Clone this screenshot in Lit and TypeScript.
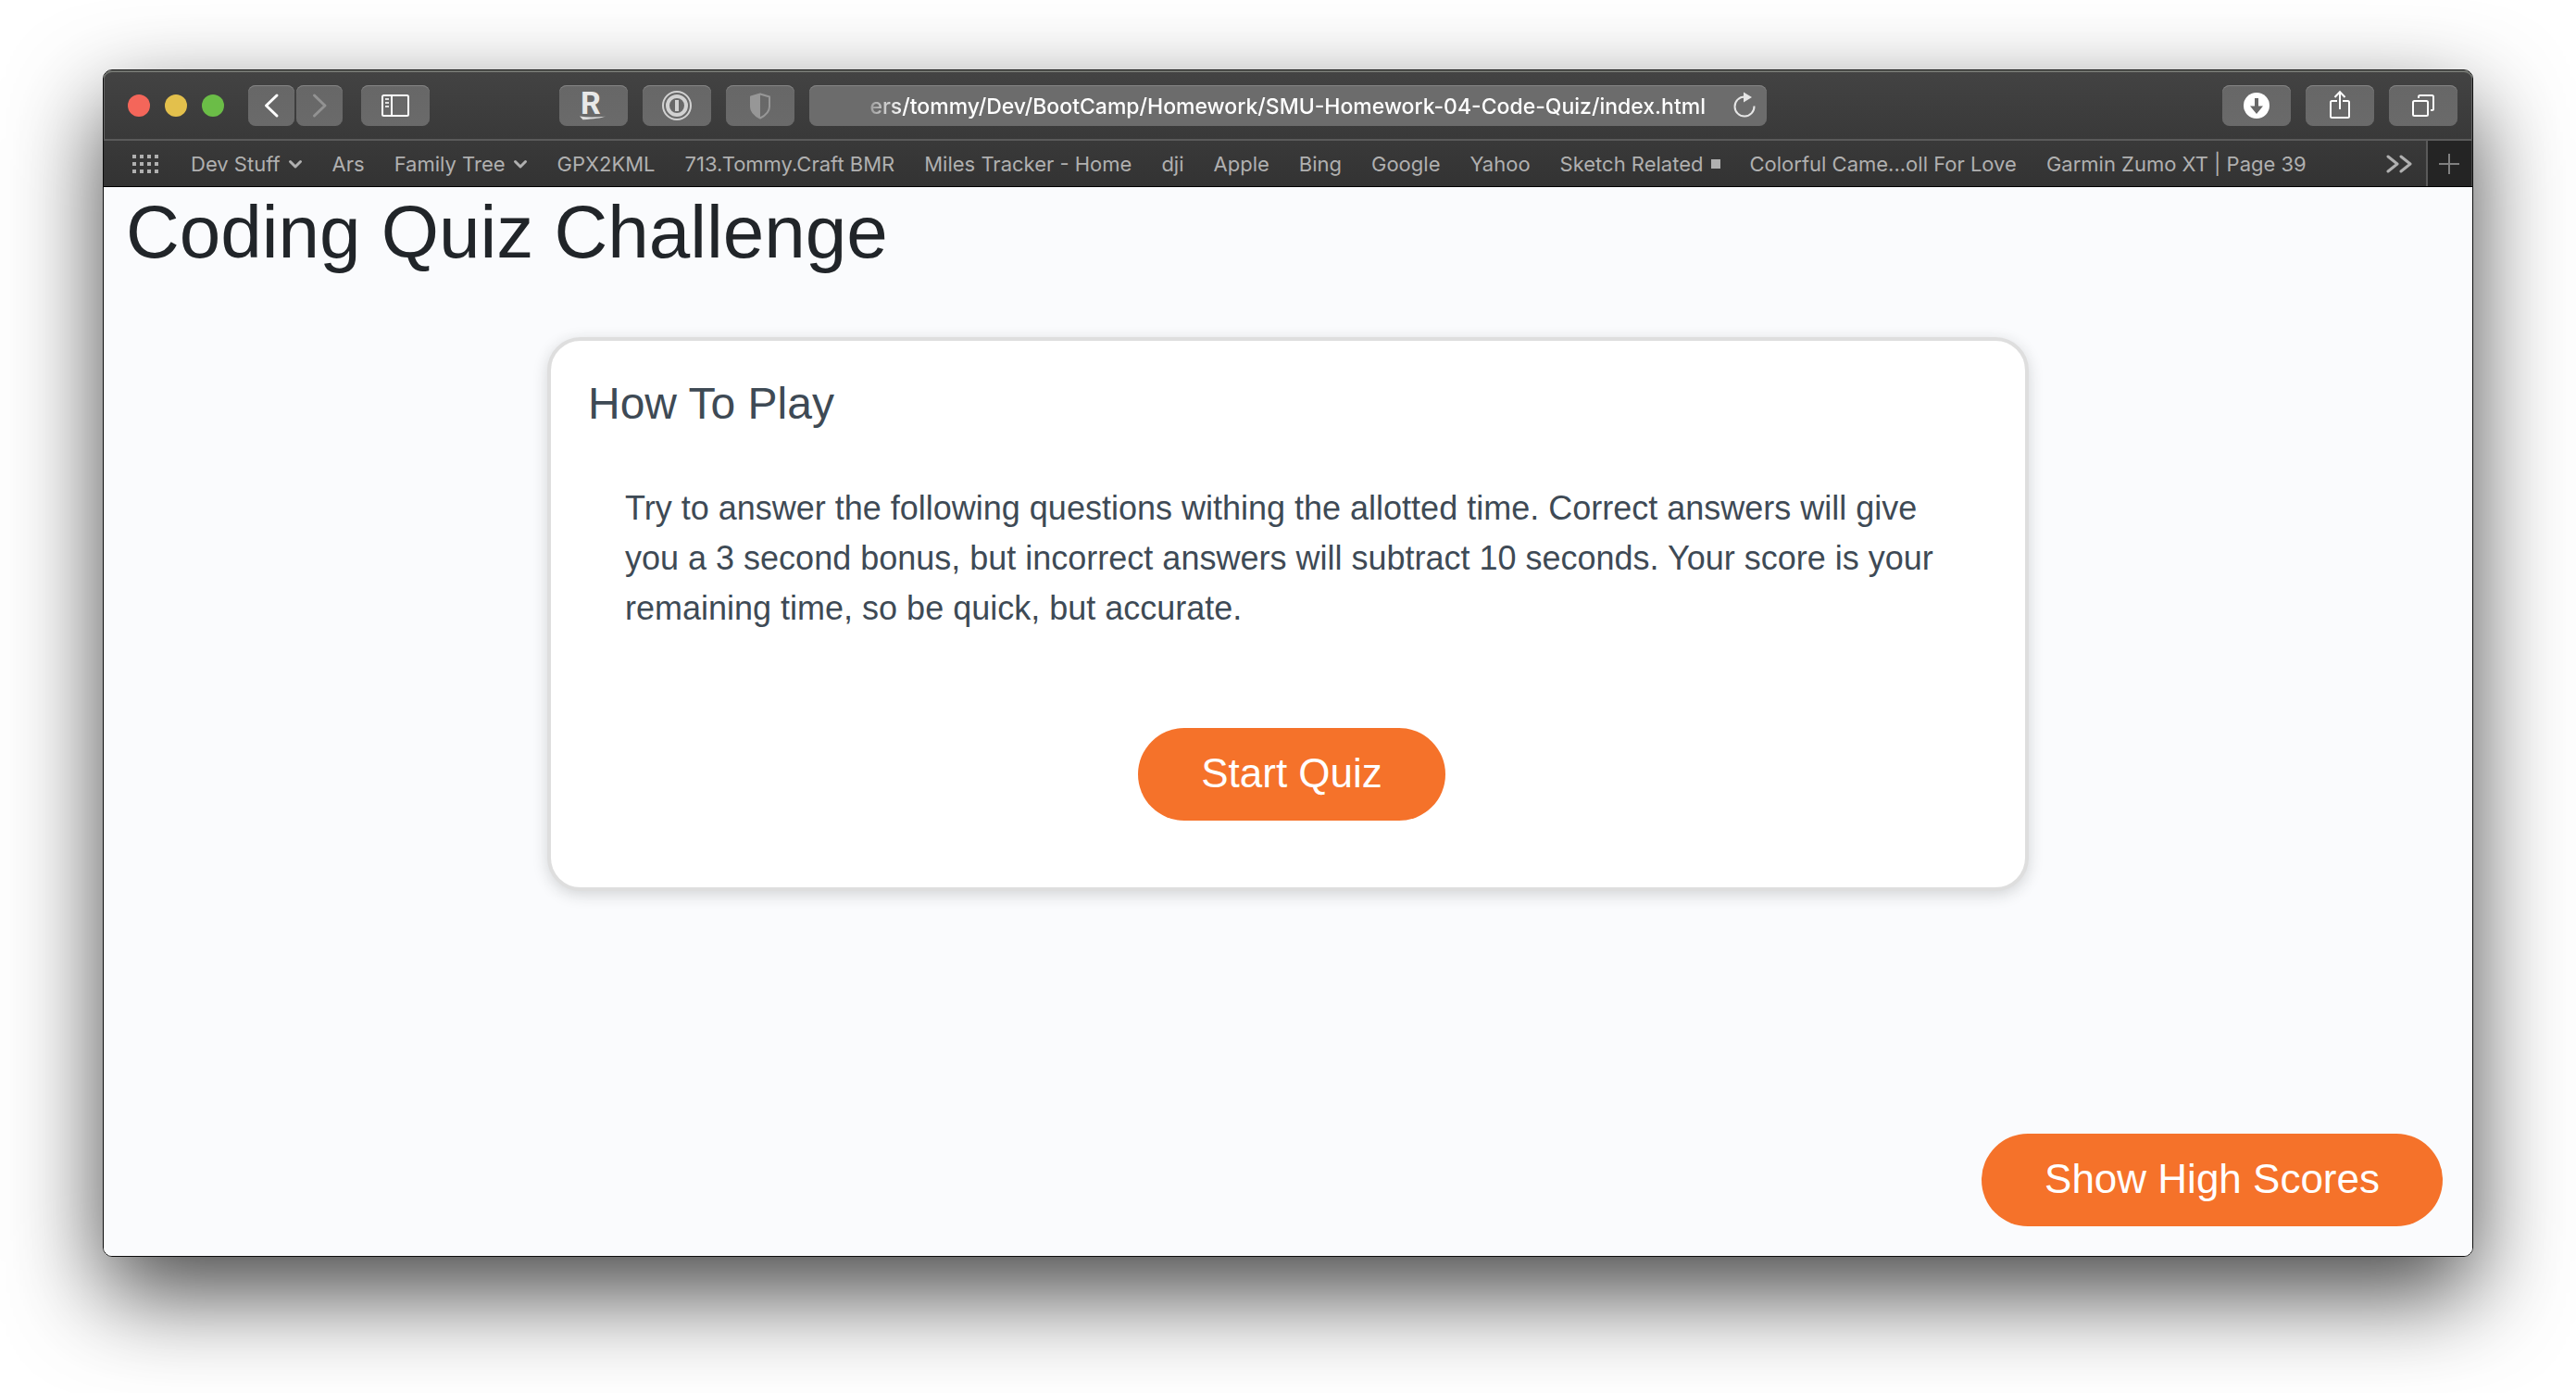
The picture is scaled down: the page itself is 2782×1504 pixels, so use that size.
import { LitElement, html, css, svg, nothing } from "lit";
import { customElement } from "lit/decorators.js";

interface Bookmark {
  label: string;
  mark?: "menu" | "tabs";
}

const BOOKMARKS: Bookmark[] = [
  { label: "Dev Stuff", mark: "menu" },
  { label: "Ars" },
  { label: "Family Tree", mark: "menu" },
  { label: "GPX2KML" },
  { label: "713.Tommy.Craft BMR" },
  { label: "Miles Tracker - Home" },
  { label: "dji" },
  { label: "Apple" },
  { label: "Bing" },
  { label: "Google" },
  { label: "Yahoo" },
  { label: "Sketch Related", mark: "tabs" },
  { label: "Colorful Came...oll For Love" },
  { label: "Garmin Zumo XT | Page 39" },
];

const ICONS = {
  back: svg`<path d="M31 11 19.500 22 31 33" stroke="#fff" stroke-width="3" stroke-linecap="round" stroke-linejoin="round"/>`,
  forward: svg`<path d="M19.500 11 31 22 19.500 33" stroke="#929292" stroke-width="3" stroke-linecap="round" stroke-linejoin="round"/>`,
  sidebar: svg`<rect x="23" y="11" width="28" height="22" rx="1.500" stroke="#fff" stroke-width="2"/><path d="M33 11v22" stroke="#fff" stroke-width="2"/><path d="M26 15h4M26 19h4M26 23h4" stroke="#e0e0e0" stroke-width="2"/>`,
  rewards: svg`<text x="23" y="31" font-family="Roboto, sans-serif" font-weight="700" font-size="34" fill="#e8e8e8">R</text><path d="M22 33.500C31 35 41 34.500 50 33.800 44 35.500 38 36.500 25.500 37.200Z" fill="#dcdcdc"/>`,
  password: svg`<circle cx="37" cy="22" r="15" stroke="#d2d2d2" stroke-width="2"/><circle cx="37" cy="22" r="10" stroke="#d2d2d2" stroke-width="4"/><path d="M37 16v12" stroke="#d2d2d2" stroke-width="4"/>`,
  shield: svg`<path d="M37 9.500 47 12.500V23C47 29 42 33 37 35.500 32 33 27 29 27 23V12.500Z" stroke="#979797" stroke-width="2" stroke-linejoin="round"/><path d="M37 9 26.500 12.500V23C26.500 29 32 33.500 37 36Z" fill="#979797"/>`,
  download: svg`<circle cx="37" cy="22" r="14" fill="#fff"/><path d="M35 14h4v8.500h5L37 31 30 22.500h5Z" fill="#686868"/>`,
  share: svg`<path d="M34 17H28.500a1.500 1.500 0 0 0-1.500 1.500v15a1.500 1.500 0 0 0 1.500 1.500h17a1.500 1.500 0 0 0 1.500-1.500v-15a1.500 1.500 0 0 0-1.500-1.500H40M37 26V7.500M31.500 13 37 7.300 42.500 13" stroke="#fff" stroke-width="2"/>`,
  tabs: svg`<rect x="26" y="17" width="16" height="16" rx="1.500" stroke="#fff" stroke-width="2"/><path d="M32 14V12.500a1.500 1.500 0 0 1 1.500-1.500h13a1.500 1.500 0 0 1 1.500 1.500v13a1.500 1.500 0 0 1-1.500 1.500H45" stroke="#fff" stroke-width="2"/>`,
};

type IconName = keyof typeof ICONS;

@customElement("browser-toolbar")
export class BrowserToolbar extends LitElement {
  static styles = css`
    :host {
      display: grid;
      grid-template-columns: 1fr minmax(200px, 1034px) 1fr;
      column-gap: 16px;
      align-items: start;
      height: 74px;
      padding: 16px 16px 0;
      box-sizing: border-box;
      background: linear-gradient(#434343, #393939);
      box-shadow: inset 0 2px #71746f, inset 1px 0 #656565, inset -1px 0 #656565;
      border-radius: 9px 9px 0 0;
    }
    .side {
      display: flex;
      align-items: center;
      gap: 16px;
    }
    .side.end {
      justify-content: flex-end;
    }
    .lights {
      display: flex;
      gap: 16px;
      margin: 0 10px;
    }
    .light {
      width: 24px;
      height: 24px;
      padding: 0;
      border: 0;
      border-radius: 50%;
    }
    .close {
      background: #f4665a;
    }
    .minimise {
      background: #e3c04c;
    }
    .zoom {
      background: #6bbd47;
    }
    .history {
      display: flex;
      gap: 2px;
      margin-right: 4px;
    }
    .extensions {
      display: flex;
      gap: 16px;
      margin-left: auto;
    }
    .tool {
      display: block;
      width: 74px;
      height: 44px;
      padding: 0;
      border: 0;
      border-radius: 8px;
      background: linear-gradient(#676767, #6a6a6a);
      box-shadow: inset 0 1px #858585;
    }
    .tool.narrow {
      width: 50px;
    }
    svg {
      display: block;
      fill: none;
    }
    .address {
      display: flex;
      align-items: center;
      height: 44px;
      padding: 0 10px 0 46px;
      border-radius: 8px;
      background: #6c6c6c;
      box-shadow: inset 0 1px #858585;
    }
    .url {
      flex: 1;
      min-width: 0;
      height: 44px;
      padding: 2px 0 0;
      border: 0;
      outline: 0;
      box-sizing: border-box;
      background: transparent;
      color: #fff;
      text-align: right;
      font: 500 23px Inter, "Liberation Sans", sans-serif;
      mask-image: linear-gradient(to right, transparent, #000 56px);
    }
    .reload {
      width: 28px;
      height: 32px;
      margin-left: 28px;
      padding: 0;
      border: 0;
      background: none;
    }
  `;

  private tool(icon: IconName, label: string, narrow = false) {
    const width = narrow ? 50 : 74;
    return html`<button class=${narrow ? "tool narrow" : "tool"} aria-label=${label}>
      <svg width=${width} height="44" viewBox="0 0 ${width} 44" aria-hidden="true">${ICONS[icon]}</svg>
    </button>`;
  }

  render() {
    return html`
      <div class="side">
        <div class="lights">
          <button class="light close" aria-label="Close window"></button>
          <button class="light minimise" aria-label="Minimise window"></button>
          <button class="light zoom" aria-label="Zoom window"></button>
        </div>
        <div class="history">${this.tool("back", "Back", true)}${this.tool("forward", "Forward", true)}</div>
        ${this.tool("sidebar", "Show sidebar")}
        <div class="extensions">
          ${this.tool("rewards", "Rewards")}${this.tool("password", "Passwords")}${this.tool("shield", "Privacy report")}
        </div>
      </div>
      <div class="address">
        <input
          class="url"
          type="text"
          aria-label="Address"
          .value=${"ers/tommy/Dev/BootCamp/Homework/SMU-Homework-04-Code-Quiz/index.html"}
        />
        <button class="reload" aria-label="Reload page">
          <svg width="28" height="32" viewBox="0 0 28 32" aria-hidden="true">
            <path d="M24.500 16.500A10.500 10.500 0 1 1 14 6.500" stroke="#e6e6e6" stroke-width="2" />
            <path d="M13 1.500v11l9-5.500Z" fill="#e6e6e6" />
          </svg>
        </button>
      </div>
      <div class="side end">
        ${this.tool("download", "Downloads")}${this.tool("share", "Share")}${this.tool("tabs", "Tab overview")}
      </div>
    `;
  }
}

@customElement("bookmarks-bar")
export class BookmarksBar extends LitElement {
  static styles = css`
    :host {
      display: flex;
      align-items: stretch;
      height: 52px;
      box-sizing: border-box;
      border-top: 2px solid #5a5a5a;
      border-bottom: 1px solid #000;
      background: linear-gradient(#393939, #333);
      font-family: Inter, "Liberation Sans", sans-serif;
      font-size: 22px;
      line-height: 28px;
      color: #b0b0b0;
    }
    svg {
      display: block;
      fill: none;
    }
    .plain {
      padding: 0;
      border: 0;
      background: none;
    }
    .grid {
      margin-left: 31px;
    }
    .links {
      flex: 1;
      min-width: 0;
      display: flex;
      align-items: center;
      gap: 32px;
      margin-left: 35px;
      overflow: hidden;
      white-space: nowrap;
    }
    .link {
      display: flex;
      align-items: center;
      gap: 8px;
      color: inherit;
      text-decoration: none;
    }
    .square {
      width: 10px;
      height: 10px;
      background: #b0b0b0;
    }
    .more {
      margin-right: 15px;
    }
    .add {
      width: 50px;
      padding: 0 0 0 12px;
      border: 0;
      border-left: 2px solid #5a5a5a;
      border-right: 1px solid #4a4a4a;
      background: #242424;
    }
  `;

  private mark(kind: Bookmark["mark"]) {
    if (kind === "menu") {
      return html`<svg width="16" height="12" viewBox="0 0 16 12" aria-hidden="true">
        <path d="M2.500 3.500 8 9l5.500-5.500" stroke="#b0b0b0" stroke-width="3" stroke-linecap="round" stroke-linejoin="round" />
      </svg>`;
    }
    return kind === "tabs" ? html`<span class="square"></span>` : nothing;
  }

  render() {
    const dots = [0, 1, 2].map((row) =>
      [0, 1, 2, 3].map((col) => svg`<rect x=${col * 8} y=${row * 8} width="4" height="4" fill="#b0b0b0"/>`),
    );
    return html`
      <button class="plain grid" aria-label="Show favourites">
        <svg width="28" height="20" viewBox="0 0 28 20" aria-hidden="true">${dots}</svg>
      </button>
      <nav class="links" aria-label="Bookmarks">
        ${BOOKMARKS.map((b) => html`<a class="link" href="#">${b.label}${this.mark(b.mark)}</a>`)}
      </nav>
      <button class="plain more" aria-label="More bookmarks">
        <svg width="28" height="20" viewBox="0 0 28 20" aria-hidden="true">
          <path d="M2 2l10 8-10 8M16 2l10 8-10 8" stroke="#b0b0b0" stroke-width="3" stroke-linecap="round" stroke-linejoin="round" />
        </svg>
      </button>
      <button class="add" aria-label="New tab">
        <svg width="22" height="22" viewBox="0 0 22 22" aria-hidden="true">
          <path d="M11 0v22M0 11h22" stroke="#808080" stroke-width="2" />
        </svg>
      </button>
    `;
  }
}

@customElement("quiz-page")
export class QuizPage extends LitElement {
  static styles = css`
    :host {
      display: flex;
      flex-direction: column;
      box-sizing: border-box;
      padding: 0 32px 32px 24px;
      border-radius: 0 0 9px 9px;
      background: #fafbfd;
      font-family: "Liberation Sans", Arial, sans-serif;
    }
    .title {
      margin: 0;
      color: #212529;
      font-size: 80px;
      font-weight: 400;
      line-height: 98px;
    }
    .card {
      align-self: center;
      width: 100%;
      max-width: 1600px;
      box-sizing: border-box;
      margin: 64px 0 0 8px;
      padding: 40px;
      border: 4px solid #dedede;
      border-radius: 36px;
      background: #fff;
      box-shadow: 0 4px 16px rgba(33, 37, 41, 0.18);
      color: #3e4a55;
    }
    .heading {
      margin: 0;
      font-size: 48px;
      font-weight: 400;
      line-height: 56px;
    }
    .rules {
      margin: 58px 40px 0;
      font-size: 36px;
      line-height: 54px;
    }
    .action {
      display: flex;
      justify-content: center;
      margin: 102px 0 32px 8px;
    }
    .pill {
      height: 100px;
      padding: 0 68px 2px;
      border: 0;
      border-radius: 50px;
      background: #f5722a;
      color: #fff;
      font: 400 44px "Liberation Sans", Arial, sans-serif;
    }
    .scores {
      align-self: flex-end;
      margin-top: auto;
    }
  `;

  render() {
    return html`
      <h1 class="title">Coding Quiz Challenge</h1>
      <section class="card">
        <h2 class="heading">How To Play</h2>
        <p class="rules">
          Try to answer the following questions withing the allotted time. Correct answers will give you a 3 second
          bonus, but incorrect answers will subtract 10 seconds. Your score is your remaining time, so be quick, but
          accurate.
        </p>
        <div class="action"><button class="pill">Start Quiz</button></div>
      </section>
      <button class="pill scores">Show High Scores</button>
    `;
  }
}

@customElement("app-root")
export class AppRoot extends LitElement {
  static styles = css`
    :host {
      display: flex;
      min-height: 100vh;
      box-sizing: border-box;
      padding: 75px 111px 147px;
      background: #fff;
    }
    .window {
      flex: 1;
      min-width: 0;
      display: flex;
      flex-direction: column;
      border: 1px solid #0c0c0c;
      border-radius: 10px;
      box-shadow: 0 40px 100px rgba(0, 0, 0, 0.72);
    }
    .page {
      flex: 1;
    }
  `;

  render() {
    return html`
      <main class="window">
        <browser-toolbar></browser-toolbar>
        <bookmarks-bar></bookmarks-bar>
        <quiz-page class="page"></quiz-page>
      </main>
    `;
  }
}
